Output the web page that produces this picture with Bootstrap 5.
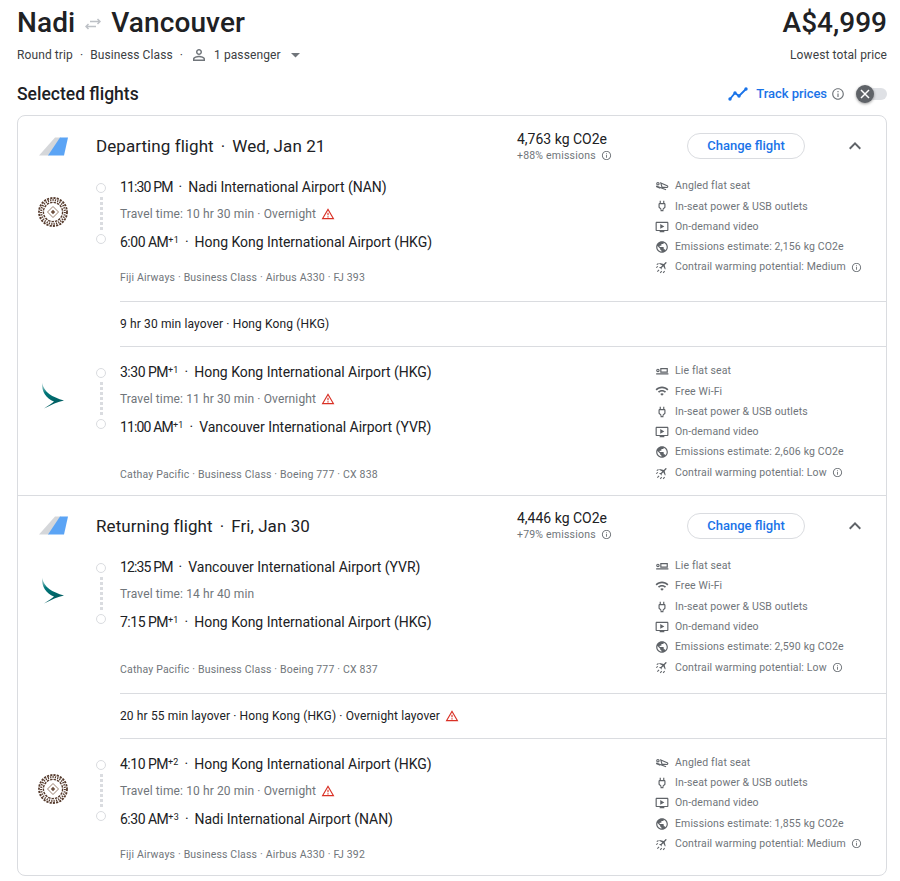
<!DOCTYPE html>
<html lang="en"><head><meta charset="utf-8"><title>Nadi to Vancouver</title>
<link href="https://cdn.jsdelivr.net/npm/bootstrap@5.3.0/dist/css/bootstrap.min.css" rel="stylesheet">
<style>
body{font-family:Roboto,"Liberation Sans",sans-serif;color:#202124;background:#fff;margin:0;padding:0 13px 0 17px;width:900px;height:881px;overflow:hidden}
.ttl-row{height:46px}
.route{font-size:28px;font-weight:500;line-height:46px;letter-spacing:.1px}
.swap{margin:1px 10px 0 10px;color:#bdc1c6}
.price{font-size:28px;font-weight:500;line-height:46px}
.meta-row{height:18px;font-size:12px;color:#3c4043;letter-spacing:.1px}
.sep{margin:0 7px}
.pers{margin:0 6px 0 0;color:#70757a}
.caret{margin-left:10px;color:#70757a}
.sel-row{height:20px;margin:20px 0 11px}
.sel-title{font-size:17.500px;font-weight:500}
.track{color:#1a73e8;font-size:13px;font-weight:500;letter-spacing:-.05px}
.switch-track{width:27px;height:12px;background:#dfe1e5;border-radius:6px;margin-left:15px;display:block;position:relative}
.switch-knob{position:absolute;left:-4px;top:-3px;width:18px;height:18px;border-radius:50%;background:#5f6368;box-shadow:0 1px 3px rgba(0,0,0,.4);color:#fff;display:flex;align-items:center;justify-content:center}
.ic-grey{color:#70757a}
.fl-card{border:1px solid #dadce0;border-radius:8px;height:761px}
.sec-head{height:60px}
.logo-col{width:78px;padding-left:20px;flex:none}
.sec-title{width:421px;font-size:17px;line-height:24px;flex:none;letter-spacing:.07px}
.sec-title .pt{margin:0 7px}
.co2{width:170px;flex:none}
.co2-main{font-size:14px;line-height:18px}
.co2-sub{font-size:10.500px;line-height:15px;color:#70757a;letter-spacing:.2px}
.chg{width:118px;height:26px;padding:0;border:1px solid #dadce0;border-radius:13px;background:#fff;color:#1a73e8;font-size:13px;font-weight:500;line-height:24px;flex:none}
.chev{margin-left:38px;color:#5f6368}
.seg{display:flex;padding-bottom:15px}
.seg-next{padding-top:14px;padding-bottom:12px}
.seg-left{width:637px;flex:none;display:flex;flex-direction:column}
.journey{display:flex}
.fl-logo{margin-top:21px;display:block}
.rail{width:24px;flex:none;display:flex;flex-direction:column;padding-top:7px;height:77px}
.dot-c{width:10px;height:10px;border:1px solid #dadce0;border-radius:50%;display:block}
.dot-l{width:3px;height:33px;margin:4px 0 4px 3.500px;display:block;background:repeating-linear-gradient(#dadce0 0 3px,transparent 3px 5px)}
.tm{font-size:14px;height:22px;line-height:22px;letter-spacing:-.03px;white-space:nowrap}
.arr{margin-top:1px}
.tm sup{font-size:9px;top:-.45em;letter-spacing:.2px}
.tm .pt{margin:0 6px}
.hh{letter-spacing:-.5px}
.hh1{letter-spacing:-.85px}
.trv{font-size:12px;height:32px;line-height:32px;color:#70757a;letter-spacing:.12px}
.air{font-size:10.500px;line-height:16px;color:#70757a;margin:17px 0 0 102px;letter-spacing:.18px}
.amen{font-size:10.500px;color:#70757a;letter-spacing:.13px}
.am-row{height:20.300px;display:flex;align-items:center;white-space:nowrap}
.am-ic{width:14px;height:14px;margin-right:6px;flex:none;color:#5f6368}
.lay{margin-left:102px;height:46px;border-top:1px solid #dadce0;border-bottom:1px solid #dadce0;font-size:12px;letter-spacing:.13px;display:flex;align-items:center}
.sec-2{border-top:1px solid #dadce0}
.warn{color:#d93025;margin-left:5px}
.inf{margin-left:5px;color:#70757a}
</style></head>
<body>
<svg width="0" height="0" class="position-absolute">
<defs>
<linearGradient id="cx" x1="0" y1="0" x2=".3" y2="1"><stop offset="0" stop-color="#dcecea"/><stop offset=".4" stop-color="#00777a"/><stop offset="1" stop-color="#005a5e"/></linearGradient>
</defs>
<symbol id="i-info" viewBox="0 0 24 24"><path fill="currentColor" d="M11 7h2v2h-2zm0 4h2v6h-2zm1-9C6.480 2 2 6.480 2 12s4.480 10 10 10 10-4.480 10-10S17.520 2 12 2zm0 18c-4.410 0-8-3.590-8-8s3.590-8 8-8 8 3.590 8 8-3.590 8-8 8z"/></symbol>
<symbol id="i-warn" viewBox="0 0 24 24"><path fill="currentColor" d="M12 5.990L19.530 19H4.470L12 5.990M12 2L1 21h22L12 2zm1 14h-2v2h2v-2zm0-6h-2v4h2v-4z"/></symbol>
<symbol id="i-plug" viewBox="0 0 24 24"><path fill="currentColor" d="M16.010 7L16 3h-2v4h-4V3H8v4h-.01C7 6.990 6 7.990 6 8.990v5.490L9.500 18v3h5v-3l3.500-3.510v-5.500c0-1-1-2-1.990-1.990zM16 13.660L13 16.670V19h-2v-2.330L8 13.650V9h8v4.660z"/></symbol>
<symbol id="i-video" viewBox="0 0 24 24"><path fill="currentColor" d="M21 3H3c-1.110 0-2 .89-2 2v12c0 1.100.89 2 2 2h5v2h8v-2h5c1.100 0 1.990-.9 1.990-2L23 5c0-1.110-.9-2-2-2zm0 14H3V5h18v12zm-5-6l-7 4V7z"/></symbol>
<symbol id="i-globe" viewBox="0 0 24 24"><path fill="currentColor" d="M12 2C6.480 2 2 6.480 2 12s4.480 10 10 10 10-4.480 10-10S17.520 2 12 2zm-1 17.930c-3.950-.49-7-3.850-7-7.930 0-.62.08-1.210.21-1.790L9 15v1c0 1.100.9 2 2 2v1.930zm6.900-2.540c-.26-.81-1-1.390-1.900-1.390h-1v-3c0-.55-.45-1-1-1H8v-2h2c.55 0 1-.45 1-1V7h2c1.100 0 2-.9 2-2v-.41c2.930 1.190 5 4.060 5 7.410 0 2.080-.8 3.970-2.100 5.390z"/></symbol>
<symbol id="i-wifi" viewBox="0 0 24 24"><path fill="currentColor" d="M1 9l2 2c4.970-4.970 13.030-4.970 18 0l2-2C16.930 2.930 7.080 2.930 1 9zm8 8l3 3 3-3c-1.650-1.660-4.340-1.660-6 0zm-4-4l2 2c2.760-2.760 7.240-2.760 10 0l2-2C15.140 9.140 8.870 9.140 5 13z"/></symbol>
<symbol id="i-cont" viewBox="0 0 24 24"><path fill="currentColor" transform="translate(14.500 9.500) rotate(45) scale(.75) translate(-12 -12)" d="M21 16v-2l-8-5V3.500c0-.83-.67-1.500-1.500-1.500S10 2.670 10 3.500V9l-8 5v2l8-2.500V19l-2 1.500V22l3.500-1 3.500 1v-1.500L13 19v-5.500l8 2.500z"/><path fill="none" stroke="currentColor" stroke-width="1.800" d="M3 8l3-2M2 13l3-2M9 22l2.500-3M4 20l3-3M14 22l2.500-3"/></symbol>
<symbol id="i-angle" viewBox="0 0 24 24"><g fill="none" stroke="currentColor" stroke-width="2"><circle cx="5" cy="8" r="2"/><path d="M10 7l11 4.500c1.500.7 1 3-.5 3L12 14zM2 12l17 6.500"/><path d="M2 13l7 3"/></g></symbol>
<symbol id="i-flat" viewBox="0 0 24 24"><g fill="none" stroke="currentColor" stroke-width="2"><circle cx="5" cy="11" r="2"/><path d="M10 8h11v6H10zM2 17h21"/></g></symbol>
<symbol id="l-tail" viewBox="0 0 30 19"><path fill="#d5d7da" d="M1 18.500 17 .5h6L11 18.500z"/><path fill="#5ba4f5" d="M22 .5h8L26 18.500H10z"/></symbol>
<symbol id="l-fiji" viewBox="0 0 30 30"><g fill="none" stroke="#553a2c"><circle cx="15" cy="15" r="14" stroke-width="1.800" stroke-dasharray="2.200 1.100"/><circle cx="15" cy="15" r="11.900" stroke-width="2" stroke-dasharray="1.200 1.200"/><circle cx="15" cy="15" r="9.600" stroke-width="1.400" stroke-dasharray="2.500 1"/><path stroke-width="1" stroke="#9a8170" d="M15 9.500l5.500 5.500-5.500 5.500-5.500-5.500z"/></g><path fill="#6b4e3d" d="M15 12.800l2.200 2.200-2.200 2.200-2.200-2.200z"/></symbol>
<symbol id="l-cx" viewBox="0 0 30 30"><path fill="url(#cx)" d="M4 .5C6 10.500 14 15 26 18.500 20 19.500 13 23 6 26.500 10 23.500 14 21.500 16 19.500 8 16.500 3.500 9.500 4 .5z"/></symbol>
</svg>

<div class="d-flex justify-content-between ttl-row">
  <div class="route d-flex align-items-center">Nadi<svg class="swap" width="16" height="12" viewBox="0 0 16 12" fill="none" stroke="currentColor" stroke-width="1.500"><path d="M5 3.500h10M12.500 1 15 3.500 12.500 6M11 8.500H1M3.500 6 1 8.500 3.500 11"/></svg>Vancouver</div>
  <div class="price">A$4,999</div>
</div>
<div class="d-flex justify-content-between align-items-center meta-row">
  <div class="d-flex align-items-center">Round trip<span class="sep">·</span>Business Class<span class="sep">·</span><svg width="18" height="18" viewBox="0 0 24 24" class="pers"><path fill="currentColor" d="M12 5.900c1.160 0 2.100.94 2.100 2.100s-.94 2.100-2.100 2.100S9.900 9.160 9.900 8s.94-2.100 2.100-2.100m0 9c2.970 0 6.100 1.460 6.100 2.100v1.100H5.900V17c0-.64 3.130-2.100 6.100-2.100M12 4C9.790 4 8 5.790 8 8s1.790 4 4 4 4-1.790 4-4-1.790-4-4-4zm0 9c-2.670 0-8 1.340-8 4v3h16v-3c0-2.660-5.330-4-8-4z"/></svg>1 passenger<svg class="caret" width="9" height="5" viewBox="0 0 9 5"><path fill="currentColor" d="M0 0h9L4.500 4.500z"/></svg></div>
  <div>Lowest total price</div>
</div>
<div class="d-flex justify-content-between align-items-center sel-row">
  <div class="sel-title">Selected flights</div>
  <div class="d-flex align-items-center track"><svg width="20" height="14" viewBox="0 0 20 14" class="me-2" fill="none" stroke="currentColor" stroke-width="1.800"><path d="M2 12l5-6 4 3 7-7"/><g fill="currentColor" stroke="none"><circle cx="2" cy="12" r="1.700"/><circle cx="7" cy="6" r="1.700"/><circle cx="11" cy="9" r="1.700"/><circle cx="18" cy="2" r="1.700"/></g></svg>Track prices<svg class="ms-1 ic-grey" width="14" height="14"><use href="#i-info"/></svg><span class="switch-track"><span class="switch-knob"><svg width="10" height="10" viewBox="0 0 10 10" fill="none" stroke="currentColor" stroke-width="1.500"><path d="M1 1l8 8M9 1 1 9"/></svg></span></span></div>
</div>

<div class="fl-card">
  <section>
    <div class="d-flex align-items-center sec-head">
      <div class="logo-col"><svg width="30" height="19" class="d-block"><use href="#l-tail"/></svg></div>
      <div class="sec-title">Departing flight<span class="pt">·</span>Wed, Jan 21</div>
      <div class="co2"><div class="co2-main">4,763 kg CO2e</div><div class="co2-sub d-flex align-items-center">+88% emissions<svg class="inf" width="11" height="11"><use href="#i-info"/></svg></div></div>
      <button type="button" class="btn chg">Change flight</button>
      <svg class="chev" width="24" height="24"><path fill="currentColor" d="M7.410 15.410 12 10.830l4.590 4.580L18 14l-6-6-6 6z"/></svg>
    </div>
    <div class="seg">
      <div class="seg-left">
        <div class="journey">
          <div class="logo-col"><svg class="fl-logo" width="30" height="30"><use href="#l-fiji"/></svg></div>
          <div class="rail"><span class="dot-c"></span><span class="dot-l"></span><span class="dot-c"></span></div>
          <div>
            <div class="tm"><span class="hh1">11:30 PM</span><span class="pt">·</span>Nadi International Airport (NAN)</div>
            <div class="trv d-flex align-items-center">Travel time: 10 hr 30 min · Overnight<svg class="warn" width="14" height="14"><use href="#i-warn"/></svg></div>
            <div class="tm arr"><span class="hh">6:00 AM</span><sup>+1</sup><span class="pt">·</span>Hong Kong International Airport (HKG)</div>
          </div>
        </div>
        <div class="air">Fiji Airways · Business Class · Airbus A330 · FJ 393</div>
      </div>
      <div class="amen">
        <div class="am-row"><svg class="am-ic"><use href="#i-angle"/></svg>Angled flat seat</div>
        <div class="am-row"><svg class="am-ic"><use href="#i-plug"/></svg>In-seat power &amp; USB outlets</div>
        <div class="am-row"><svg class="am-ic"><use href="#i-video"/></svg>On-demand video</div>
        <div class="am-row"><svg class="am-ic"><use href="#i-globe"/></svg>Emissions estimate: 2,156 kg CO2e</div>
        <div class="am-row"><svg class="am-ic"><use href="#i-cont"/></svg>Contrail warming potential: Medium<svg class="inf" width="11" height="11"><use href="#i-info"/></svg></div>
      </div>
    </div>
    <div class="lay">9 hr 30 min layover · Hong Kong (HKG)</div>
    <div class="seg seg-next">
      <div class="seg-left">
        <div class="journey">
          <div class="logo-col"><svg class="fl-logo" width="30" height="30"><use href="#l-cx"/></svg></div>
          <div class="rail"><span class="dot-c"></span><span class="dot-l"></span><span class="dot-c"></span></div>
          <div>
            <div class="tm"><span class="hh">3:30 PM</span><sup>+1</sup><span class="pt">·</span>Hong Kong International Airport (HKG)</div>
            <div class="trv d-flex align-items-center">Travel time: 11 hr 30 min · Overnight<svg class="warn" width="14" height="14"><use href="#i-warn"/></svg></div>
            <div class="tm arr"><span class="hh1">11:00 AM</span><sup>+1</sup><span class="pt">·</span>Vancouver International Airport (YVR)</div>
          </div>
        </div>
        <div class="air mt-auto">Cathay Pacific · Business Class · Boeing 777 · CX 838</div>
      </div>
      <div class="amen">
        <div class="am-row"><svg class="am-ic"><use href="#i-flat"/></svg>Lie flat seat</div>
        <div class="am-row"><svg class="am-ic"><use href="#i-wifi"/></svg>Free Wi-Fi</div>
        <div class="am-row"><svg class="am-ic"><use href="#i-plug"/></svg>In-seat power &amp; USB outlets</div>
        <div class="am-row"><svg class="am-ic"><use href="#i-video"/></svg>On-demand video</div>
        <div class="am-row"><svg class="am-ic"><use href="#i-globe"/></svg>Emissions estimate: 2,606 kg CO2e</div>
        <div class="am-row"><svg class="am-ic"><use href="#i-cont"/></svg>Contrail warming potential: Low<svg class="inf" width="11" height="11"><use href="#i-info"/></svg></div>
      </div>
    </div>
  </section>
  <section class="sec-2">
    <div class="d-flex align-items-center sec-head">
      <div class="logo-col"><svg width="30" height="19" class="d-block"><use href="#l-tail"/></svg></div>
      <div class="sec-title">Returning flight<span class="pt">·</span>Fri, Jan 30</div>
      <div class="co2"><div class="co2-main">4,446 kg CO2e</div><div class="co2-sub d-flex align-items-center">+79% emissions<svg class="inf" width="11" height="11"><use href="#i-info"/></svg></div></div>
      <button type="button" class="btn chg">Change flight</button>
      <svg class="chev" width="24" height="24"><path fill="currentColor" d="M7.410 15.410 12 10.830l4.590 4.580L18 14l-6-6-6 6z"/></svg>
    </div>
    <div class="seg">
      <div class="seg-left">
        <div class="journey">
          <div class="logo-col"><svg class="fl-logo" width="30" height="30"><use href="#l-cx"/></svg></div>
          <div class="rail"><span class="dot-c"></span><span class="dot-l"></span><span class="dot-c"></span></div>
          <div>
            <div class="tm"><span class="hh1">12:35 PM</span><span class="pt">·</span>Vancouver International Airport (YVR)</div>
            <div class="trv">Travel time: 14 hr 40 min</div>
            <div class="tm arr"><span class="hh">7:15 PM</span><sup>+1</sup><span class="pt">·</span>Hong Kong International Airport (HKG)</div>
          </div>
        </div>
        <div class="air mt-auto">Cathay Pacific · Business Class · Boeing 777 · CX 837</div>
      </div>
      <div class="amen">
        <div class="am-row"><svg class="am-ic"><use href="#i-flat"/></svg>Lie flat seat</div>
        <div class="am-row"><svg class="am-ic"><use href="#i-wifi"/></svg>Free Wi-Fi</div>
        <div class="am-row"><svg class="am-ic"><use href="#i-plug"/></svg>In-seat power &amp; USB outlets</div>
        <div class="am-row"><svg class="am-ic"><use href="#i-video"/></svg>On-demand video</div>
        <div class="am-row"><svg class="am-ic"><use href="#i-globe"/></svg>Emissions estimate: 2,590 kg CO2e</div>
        <div class="am-row"><svg class="am-ic"><use href="#i-cont"/></svg>Contrail warming potential: Low<svg class="inf" width="11" height="11"><use href="#i-info"/></svg></div>
      </div>
    </div>
    <div class="lay">20 hr 55 min layover · Hong Kong (HKG) · Overnight layover<svg class="warn" width="14" height="14"><use href="#i-warn"/></svg></div>
    <div class="seg seg-next">
      <div class="seg-left">
        <div class="journey">
          <div class="logo-col"><svg class="fl-logo" width="30" height="30"><use href="#l-fiji"/></svg></div>
          <div class="rail"><span class="dot-c"></span><span class="dot-l"></span><span class="dot-c"></span></div>
          <div>
            <div class="tm"><span class="hh">4:10 PM</span><sup>+2</sup><span class="pt">·</span>Hong Kong International Airport (HKG)</div>
            <div class="trv d-flex align-items-center">Travel time: 10 hr 20 min · Overnight<svg class="warn" width="14" height="14"><use href="#i-warn"/></svg></div>
            <div class="tm arr"><span class="hh">6:30 AM</span><sup>+3</sup><span class="pt">·</span>Nadi International Airport (NAN)</div>
          </div>
        </div>
        <div class="air">Fiji Airways · Business Class · Airbus A330 · FJ 392</div>
      </div>
      <div class="amen">
        <div class="am-row"><svg class="am-ic"><use href="#i-angle"/></svg>Angled flat seat</div>
        <div class="am-row"><svg class="am-ic"><use href="#i-plug"/></svg>In-seat power &amp; USB outlets</div>
        <div class="am-row"><svg class="am-ic"><use href="#i-video"/></svg>On-demand video</div>
        <div class="am-row"><svg class="am-ic"><use href="#i-globe"/></svg>Emissions estimate: 1,855 kg CO2e</div>
        <div class="am-row"><svg class="am-ic"><use href="#i-cont"/></svg>Contrail warming potential: Medium<svg class="inf" width="11" height="11"><use href="#i-info"/></svg></div>
      </div>
    </div>
  </section>
</div>
</body></html>
